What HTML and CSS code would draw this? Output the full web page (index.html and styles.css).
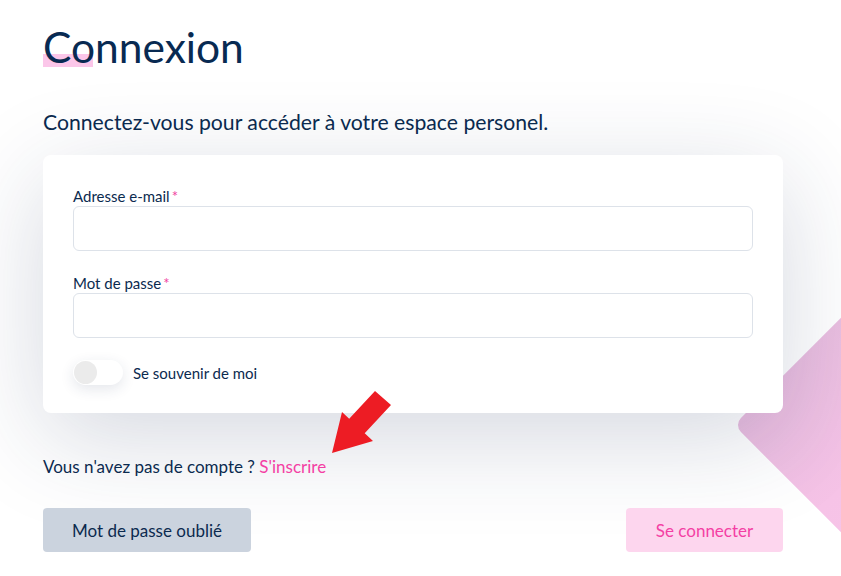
FILE: index.html
```html
<!DOCTYPE html>
<html lang="fr">
<head>
<meta charset="utf-8">
<title>Connexion</title>
<link rel="stylesheet" href="styles.css">
</head>
<body>
<div class="backdrop"><div class="diamond"></div></div>
<main class="page">
  <h1 class="title"><span class="title-mark"></span>Connexion</h1>
  <p class="subtitle">Connectez-vous pour accéder à votre espace personel.</p>
  <form class="card">
    <label class="field">
      <span class="label">Adresse e-mail<span class="req">*</span></span>
      <input class="input" type="email">
    </label>
    <label class="field">
      <span class="label">Mot de passe<span class="req">*</span></span>
      <input class="input" type="password">
    </label>
    <div class="remember">
      <span class="toggle"><span class="knob"></span></span>
      <span class="remember-text">Se souvenir de moi</span>
    </div>
  </form>
  <p class="signup">Vous n'avez pas de compte ? <a class="signup-link" href="#">S'inscrire</a></p>
  <div class="actions">
    <button class="btn btn-gray" type="button">Mot de passe oublié</button>
    <button class="btn btn-pink" type="button">Se connecter</button>
  </div>
</main>
<svg class="arrow" width="841" height="576" viewBox="0 0 841 576">
  <polygon fill="#ed1c24" points="375,391 391,405 364.7,433.2 373,441 332,453 342,412 349.2,418.7"/>
</svg>
</body>
</html>
```
FILE: styles.css
```css
* { box-sizing: border-box; }
html, body { margin: 0; padding: 0; }
body {
  width: 841px;
  height: 576px;
  overflow: hidden;
  position: relative;
  background: #ffffff;
  font-family: "Lato", "Open Sans", sans-serif;
  color: #0b2a4f;
}
.backdrop {
  position: absolute;
  left: 0;
  top: 0;
  width: 841px;
  height: 576px;
  overflow: hidden;
  z-index: 0;
}
.diamond {
  position: absolute;
  left: 796px;
  top: 275px;
  width: 300px;
  height: 300px;
  border-radius: 10px;
  transform: rotate(45deg);
  background: linear-gradient(90deg, #eabee0 0%, #f6c3e7 40%, #fbc6e9 100%);
}
.page {
  position: relative;
  z-index: 1;
  padding: 20px 58px 0 43px;
  display: flex;
  flex-direction: column;
}
.title {
  position: relative;
  margin: 0;
  font-size: 42.5px;
  font-weight: 400;
  line-height: 54px;
  color: #082a52;
  align-self: flex-start;
}
.title-mark {
  position: absolute;
  left: 0;
  top: 34px;
  width: 50px;
  height: 13px;
  background: #fbc6e9;
  z-index: -1;
}
.subtitle {
  margin: 35px 0 0;
  font-size: 21.2px;
  line-height: 26px;
  color: #0b2a4f;
}
.card {
  margin-top: 20px;
  background: #fff;
  border-radius: 8px;
  padding: 31px 30px 28px;
  box-shadow: 0 24px 100px rgba(30, 50, 90, 0.19);
  display: flex;
  flex-direction: column;
}
.field {
  display: flex;
  flex-direction: column;
  margin-bottom: 22px;
}
.label {
  font-size: 15px;
  line-height: 20px;
  color: #0b2a4f;
}
.req { color: #f0439f; margin-left: 2px; }
.input {
  height: 45px;
  border: 1px solid #dde2e9;
  border-radius: 6px;
  background: #fff;
  font: inherit;
}
.remember {
  display: flex;
  align-items: center;
  gap: 10px;
  height: 25px;
}
.toggle {
  width: 50px;
  height: 25px;
  border-radius: 13px;
  background: #fff;
  box-shadow: 0 4px 14px rgba(30, 50, 90, 0.12);
  display: flex;
  align-items: center;
  padding: 1px;
}
.knob {
  width: 23px;
  height: 23px;
  border-radius: 50%;
  background: #ebebeb;
}
.remember-text { font-size: 15px; line-height: 20px; }
.signup {
  margin: 43px 0 0;
  font-size: 17px;
  line-height: 22px;
}
.signup-link { color: #f43fa4; text-decoration: none; }
.actions {
  margin-top: 30px;
  display: flex;
  justify-content: space-between;
}
.btn {
  height: 44px;
  border: none;
  border-radius: 4px;
  font-family: inherit;
  font-size: 17px;
  padding: 0;
}
.btn-gray { background: #cbd3de; color: #0b2a4f; width: 208px; }
.btn-pink { background: #fdd6ee; color: #f43fa4; width: 157px; }
.arrow {
  position: absolute;
  left: 0;
  top: 0;
  z-index: 2;
  pointer-events: none;
}
```
